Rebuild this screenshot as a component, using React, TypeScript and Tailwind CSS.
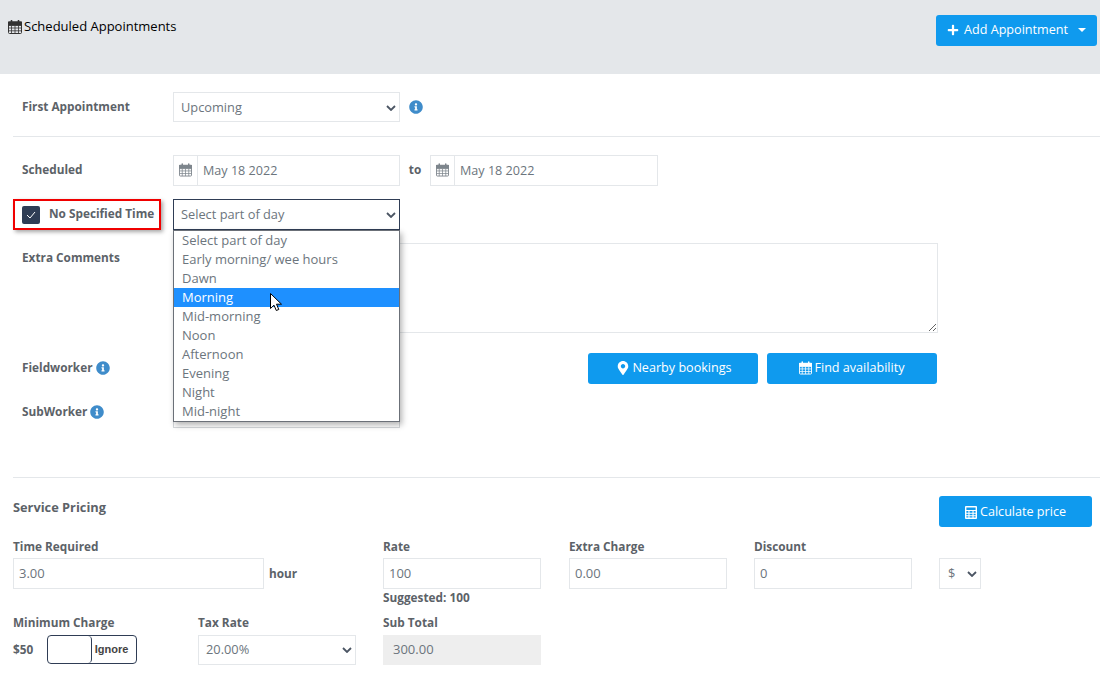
import { FaInfoCircle, FaMapMarkerAlt, FaPlus } from "react-icons/fa";

const partsOfDay = [
  "Select part of day",
  "Early morning/ wee hours",
  "Dawn",
  "Morning",
  "Mid-morning",
  "Noon",
  "Afternoon",
  "Evening",
  "Night",
  "Mid-night",
];

function CalendarIcon({ className }: { className?: string }) {
  return (
    <svg viewBox="0 0 14 14" className={className} fill="none" stroke="currentColor" strokeWidth="1">
      <rect x="0.5" y="2" width="13" height="11.5" rx="1" />
      <path d="M0.5 5.5h13M0.5 8h13M0.5 10.8h13M3.5 5.5v8M7 5.5v8M10.5 5.5v8" strokeWidth="0.8" />
      <rect x="0.5" y="2" width="13" height="3" fill="currentColor" />
      <path d="M3.5 0.5v3M10.5 0.5v3" strokeWidth="1.6" strokeLinecap="round" />
    </svg>
  );
}

function CalculatorIcon({ className }: { className?: string }) {
  return (
    <svg viewBox="0 0 13 14" className={className} fill="currentColor">
      <path d="M1 0h11a1 1 0 0 1 1 1v12a1 1 0 0 1-1 1H1a1 1 0 0 1-1-1V1a1 1 0 0 1 1-1zm.5 1.5v2.8h10V1.5zm0 4v1.7h2.2V5.5zm3.4 0v1.700h3.200V5.500zm4.400 0v1.700h2.200V5.500zM1.500 8.300V10h2.200V8.300zm3.400 0V10h3.200V8.300zm4.400 0V10h2.200V8.300zM1.500 11.100v1.400h2.200v-1.400zm3.400 0v1.400h3.200v-1.400zm4.400 0v1.400h2.200v-1.400z" fillRule="evenodd" />
    </svg>
  );
}

function Chevron() {
  return (
    <svg viewBox="0 0 10 6" className="w-[10px] h-[6px] text-[#4b5563]" fill="none" stroke="currentColor" strokeWidth="1.8">
      <path d="M1 1l4 4 4-4" />
    </svg>
  );
}

function Select({ value, className }: { value: string; className: string }) {
  return (
    <div className={`flex items-center justify-between border border-[#e4e7ea] text-[12.8px] text-[#6c757d] pl-[7px] pr-[3px] bg-white ${className}`}>
      <span>{value}</span>
      <Chevron />
    </div>
  );
}

function DateField({ value, className }: { value: string; className: string }) {
  return (
    <div className={`flex h-[31px] border border-[#e4e7ea] ${className}`}>
      <div className="w-[24px] flex items-center justify-center border-r border-[#e4e7ea] text-[#7d858c]">
        <CalendarIcon className="w-[13px] h-[14px] mb-[2px]" />
      </div>
      <div className="flex-1 pl-[5px] pt-[1px] flex items-center text-[12.6px] text-[#6c757d]">{value}</div>
    </div>
  );
}

function Label({ children, className = "" }: { children: React.ReactNode; className?: string }) {
  return <div className={`text-[11.8px] font-bold text-[#5c6268] ${className}`}>{children}</div>;
}

function Field({ value, className = "" }: { value: string; className?: string }) {
  return (
    <div className={`h-[31px] border border-[#e4e7ea] flex items-center pl-[5px] text-[13px] text-[#6c757d] ${className}`}>
      {value}
    </div>
  );
}

function BlueButton({ children, className }: { children: React.ReactNode; className: string }) {
  return (
    <button className={`h-[31px] rounded-[3px] bg-[#0f9aee] text-white text-[12.6px] flex items-center justify-center ${className}`}>
      {children}
    </button>
  );
}

const InfoIcon = ({ className = "" }: { className?: string }) => (
  <FaInfoCircle className={`text-[#3f8cca] text-[14px] ${className}`} />
);

export default function App() {
  return (
    <div className="relative w-[1100px] h-[689px] overflow-hidden bg-white font-['Open_Sans',sans-serif]">
      <header className="h-[74px] bg-[#e4e7ea] flex justify-between pl-2 pr-[3px]">
        <div className="flex items-center gap-[2px] h-[26px] mt-[14px] text-[13px] text-black self-start">
          <CalendarIcon className="w-[14px] h-[14px] text-[#333]" />
          <span>Scheduled Appointments</span>
        </div>
        <BlueButton className="w-[161px] mt-[15px] gap-[5px] pb-[1px]">
          <FaPlus className="text-[12px]" />
          <span>Add Appointment</span>
          <span className="ml-[5px] w-0 h-0 border-x-[4px] border-x-transparent border-t-[4px] border-t-white" />
        </BlueButton>
      </header>

      <section className="pt-[18px] pl-[13px]">
        <div className="flex items-center h-[30px]">
          <Label className="w-[160px] pl-[9px]">First Appointment</Label>
          <Select value="Upcoming" className="w-[227px] h-[30px] pt-[1px]" />
          <InfoIcon className="ml-[9px]" />
        </div>
        <div className="border-t border-[#e4e7ea] mt-[14px]" />

        <div className="flex items-center mt-[18px]">
          <Label className="w-[160px] pl-[9px] pb-[2px]">Scheduled</Label>
          <DateField value="May 18 2022" className="w-[227px]" />
          <span className="w-[30px] text-center text-[11.8px] font-bold text-[#5c6268] pb-[2px]">to</span>
          <DateField value="May 18 2022" className="w-[228px]" />
        </div>

        <div className="flex mt-[13px]">
          <div className="w-[160px]">
            <div className="w-[148px] h-[31px] border-2 border-[#f00000] flex items-center pl-[7px] gap-[9px] shadow-[2px_2px_4px_rgba(0,0,0,0.35)]">
              <div className="w-[18px] h-[18px] rounded-[2px] bg-[#2f3d55] flex items-center justify-center">
                <svg viewBox="0 0 10 8" className="w-[10px] h-[8px]" fill="none" stroke="#fff" strokeWidth="1">
                  <path d="M1 4l3 3 5-6" />
                </svg>
              </div>
              <Label className="pb-[2px]">No Specified Time</Label>
            </div>
          </div>
          <Select value="Select part of day" className="w-[227px] h-[31px] !border-[#2f3d55]" />
        </div>

        <div className="flex mt-[13px]">
          <Label className="w-[160px] pl-[9px] pt-[6px]">Extra Comments</Label>
          <textarea className="w-[765px] h-[90px] border border-[#e4e7ea] outline-none resize-y" />
        </div>

        <div className="flex items-center mt-[20px]">
          <Label className="w-[160px] pl-[9px] flex items-center gap-[3px] pb-[2px]">
            Fieldworker <InfoIcon />
          </Label>
          <div className="w-[227px] h-[31px] border border-[#e4e7ea]" />
          <BlueButton className="w-[170px] ml-[188px] gap-[2px] pl-[2px] pb-[1px]">
            <FaMapMarkerAlt className="text-[14px]" />
            <span>Nearby bookings</span>
          </BlueButton>
          <BlueButton className="w-[170px] ml-[9px] gap-[2px] pb-[1px]">
            <CalendarIcon className="w-[13px] h-[14px]" />
            <span>Find availability</span>
          </BlueButton>
        </div>

        <div className="flex items-center mt-[13px]">
          <Label className="w-[160px] pl-[9px] flex items-center gap-[3px] pb-[2px]">
            SubWorker <InfoIcon />
          </Label>
          <div className="w-[227px] h-[31px] border border-[#d5d8db]" />
        </div>

        <div className="border-t border-[#e4e7ea] mt-[49px]" />
      </section>

      <section className="pl-[13px]">
        <div className="flex justify-between items-start pr-[8px] mt-[18px] h-[31px]">
          <Label className="text-[12.8px] pt-[2px]">Service Pricing</Label>
          <BlueButton className="w-[153px] gap-[3px] pt-[1px]">
            <CalculatorIcon className="w-[12px] h-[13px]" />
            <span>Calculate price</span>
          </BlueButton>
        </div>

        <div className="flex mt-[10px]">
          <div className="w-[251px]">
            <Label className="h-[21px] pt-[1px]">Time Required</Label>
            <Field value="3.00" />
          </div>
          <div className="w-[119px] pl-[5px] pt-[21px]">
            <Label className="h-[31px] flex items-center">hour</Label>
          </div>
          <div className="w-[158px] mr-[28px]">
            <Label className="h-[21px] pt-[1px]">Rate</Label>
            <Field value="100" />
            <Label>Suggested: 100</Label>
          </div>
          <div className="w-[158px] mr-[27px]">
            <Label className="h-[21px] pt-[1px]">Extra Charge</Label>
            <Field value="0.00" />
          </div>
          <div className="w-[158px] mr-[27px]">
            <Label className="h-[21px] pt-[1px]">Discount</Label>
            <Field value="0" />
          </div>
          <div className="pt-[21px]">
            <Select value="$" className="w-[42px] h-[31px] !pl-[8px] !pr-[3px]" />
          </div>
        </div>

        <div className="flex mt-[7px]">
          <div className="w-[185px]">
            <Label className="h-[21px]">Minimum Charge</Label>
            <div className="flex items-center h-[30px]">
              <span className="w-[34px] text-[11.8px] font-bold text-[#5c6268]">$50</span>
              <div className="flex w-[90px] h-[29px] border border-[#2f3d55] rounded-[4px]">
                <div className="w-[44px] border-r border-[#2f3d55] rounded-[4px]" />
                <span className="flex-1 flex items-center justify-center pr-[5px] pb-[1px] text-[11px] font-bold font-['Liberation_Sans',sans-serif] text-[#444]">
                  Ignore
                </span>
              </div>
            </div>
          </div>
          <div className="w-[158px] mr-[27px]">
            <Label className="h-[21px]">Tax Rate</Label>
            <Select value="20.00%" className="h-[30px]" />
          </div>
          <div className="w-[158px]">
            <Label className="h-[21px]">Sub Total</Label>
            <div className="h-[30px] bg-[#eeeeee] flex items-center pl-[10px] text-[13px] text-[#6c757d]">300.00</div>
          </div>
        </div>
      </section>

      {/* open dropdown list */}
      <div className="absolute left-[173px] top-[230px] w-[227px] h-[192px] bg-white border border-[#6b7078] shadow-[2px_3px_6px_rgba(0,0,0,0.3)] text-[13px] text-[#6c757d]">
        {partsOfDay.map((p) => (
          <div key={p} className={`h-[19px] leading-[19px] pl-[8px] ${p === "Morning" ? "bg-[#1e90ff] text-white" : ""}`}>
            {p}
          </div>
        ))}
      </div>

      {/* mouse pointer */}
      <svg viewBox="0 0 13 19" className="absolute left-[270px] top-[293px] w-[13px] h-[19px]">
        <path d="M0.500 0.500v15l3.500-3.300 2.300 5.300 2.500-1-2.300-5.300h5z" fill="#fff" stroke="#000" strokeWidth="1" />
      </svg>
    </div>
  );
}
